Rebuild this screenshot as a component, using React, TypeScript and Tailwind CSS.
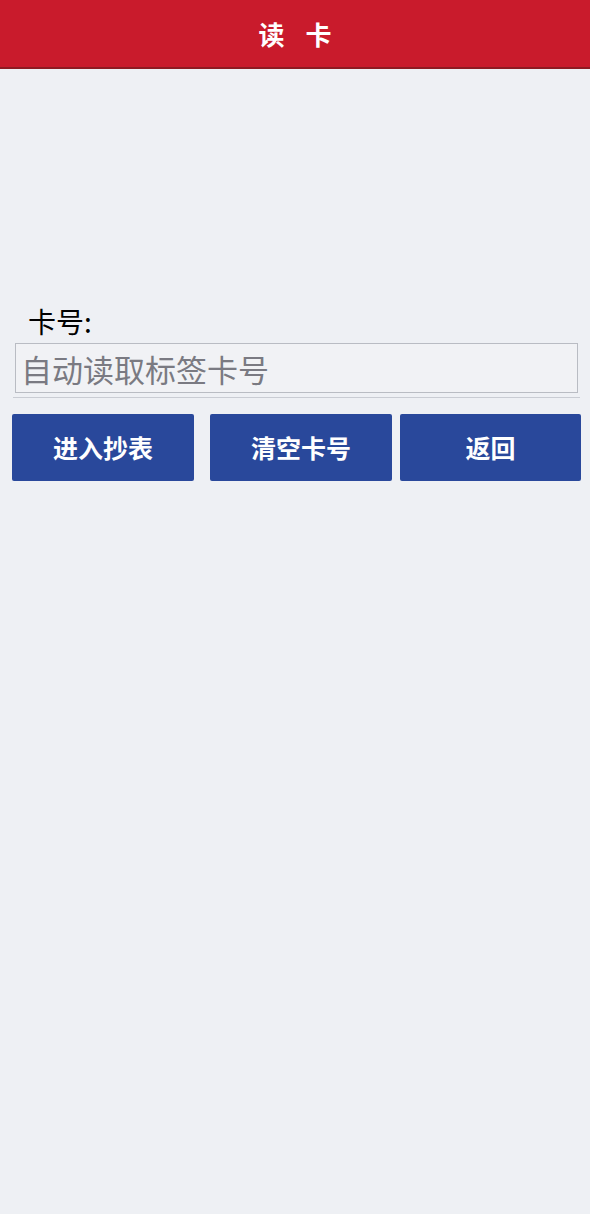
import React from 'react';

const cjk = { fontFamily: '"Noto Sans CJK SC", "Noto Sans", sans-serif' };

export default function App() {
  return (
    <div className="min-h-[1214px] w-[590px] bg-[#eef0f4]" style={cjk}>
      <div className="flex h-[69px] items-center justify-center gap-[21px] border-b-2 border-[#8e1a22] bg-[#c91b2c] text-[26px] font-bold text-white">
        <span>读</span>
        <span>卡</span>
      </div>

      <div className="pt-[234px]">
        <div className="pl-[28px] text-[28px] leading-[36px] text-black">卡号:</div>
        <div className="ml-[15px] mr-[12px] mt-[4px] flex h-[50px] items-center border border-[#b9bcc3] bg-[#f1f2f5] pl-[5px]">
          <span className="text-[31px] leading-none text-[#7a7a82]">自动读取标签卡号</span>
        </div>
        <div className="ml-[13px] mr-[10px] mt-[4px] h-px bg-[#c9ccd3]" />

        <div className="mt-[16px] flex pl-[12px]">
          <button className="flex h-[67px] w-[182px] items-center justify-center rounded-[2px] bg-[#29489b] text-[25px] font-bold text-white">
            进入抄表
          </button>
          <button className="ml-[16px] flex h-[67px] w-[182px] items-center justify-center rounded-[2px] bg-[#29489b] text-[25px] font-bold text-white">
            清空卡号
          </button>
          <button className="ml-[8px] flex h-[67px] w-[181px] items-center justify-center rounded-[2px] bg-[#29489b] text-[25px] font-bold text-white">
            返回
          </button>
        </div>
      </div>
    </div>
  );
}
